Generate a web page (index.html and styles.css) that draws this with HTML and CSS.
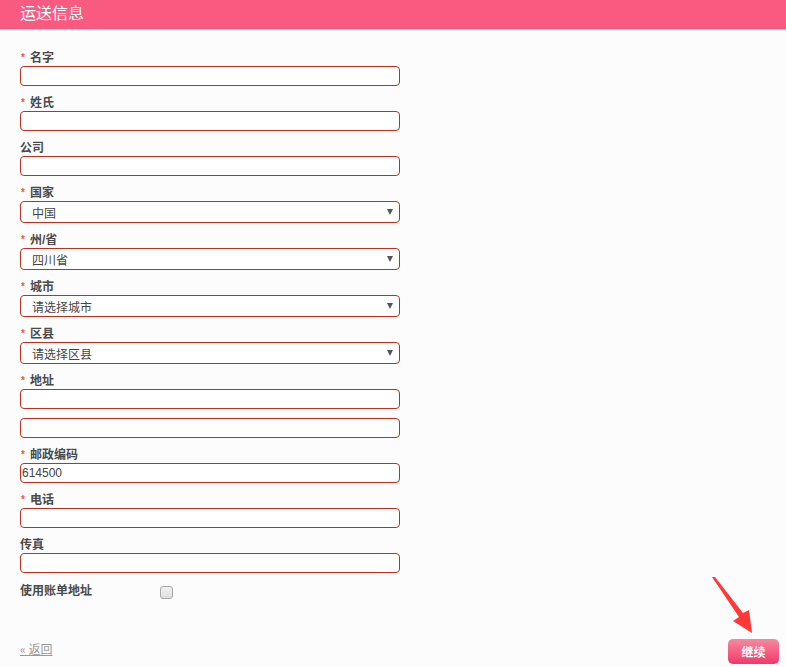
FILE: index.html
```html
<!DOCTYPE html>
<html lang="zh">
<head>
<meta charset="utf-8">
<title>运送信息</title>
<link rel="stylesheet" href="styles.css">
</head>
<body>
<header class="head"><h1 class="title">运送信息</h1></header>
<form class="form">
  <div class="field"><label class="lbl"><span class="req">*</span>名字</label><input class="inp" type="text"></div>
  <div class="field"><label class="lbl"><span class="req">*</span>姓氏</label><input class="inp" type="text"></div>
  <div class="field"><label class="lbl">公司</label><input class="inp" type="text"></div>
  <div class="field"><label class="lbl"><span class="req">*</span>国家</label><div class="sel"><span class="sel-text">中国</span></div></div>
  <div class="field"><label class="lbl"><span class="req">*</span>州/省</label><div class="sel"><span class="sel-text">四川省</span></div></div>
  <div class="field"><label class="lbl"><span class="req">*</span>城市</label><div class="sel"><span class="sel-text">请选择城市</span></div></div>
  <div class="field"><label class="lbl"><span class="req">*</span>区县</label><div class="sel"><span class="sel-text">请选择区县</span></div></div>
  <div class="field"><label class="lbl"><span class="req">*</span>地址</label><input class="inp" type="text"><input class="inp inp2" type="text"></div>
  <div class="field"><label class="lbl"><span class="req">*</span>邮政编码</label><input class="inp" type="text" value="614500"></div>
  <div class="field"><label class="lbl"><span class="req">*</span>电话</label><input class="inp" type="text"></div>
  <div class="field"><label class="lbl">传真</label><input class="inp" type="text"></div>
  <div class="check-row"><span class="lbl check-lbl">使用账单地址</span><span class="box"></span></div>
</form>
<footer class="foot">
  <a class="back" href="#">« 返回</a>
  <button class="btn" type="button">继续</button>
</footer>
<svg class="arrow" width="60" height="70" viewBox="705 570 60 70"><polygon points="712,577 715,577 743,613 749,610 752,633 733,621 739,617" fill="#ff3838"/></svg>
</body>
</html>
```
FILE: styles.css
```css
html, body { margin: 0; padding: 0; }
body {
  background: #fcfcfc;
  font-family: "Liberation Sans", "Noto Sans CJK SC", sans-serif;
  color: #444;
  width: 786px;
  height: 667px;
  position: relative;
  overflow: hidden;
}
.head {
  height: 29px;
  background: #f95b80;
  border-bottom: 1px solid #d9d9d9;
  display: flex;
  align-items: center;
  padding-left: 20px;
}
.title {
  margin: 0;
  font-size: 16px;
  font-weight: normal;
  color: #fff;
  line-height: 20px;
  position: relative;
  top: -1px;
}
.form {
  padding: 21px 0 0 20px;
  display: flex;
  flex-direction: column;
}
.field {
  display: flex;
  flex-direction: column;
  margin-bottom: 10px;
  width: 380px;
}
.lbl {
  font-size: 12px;
  line-height: 15px;
  height: 15px;
  font-weight: bold;
  color: #4a4a4a;
  display: flex;
  align-items: center;
}
.req {
  color: #f5552f;
  font-size: 10px;
  width: 10px;
  padding-left: 1px;
  box-sizing: border-box;
  position: relative;
  top: -1px;
}
.inp {
  box-sizing: border-box;
  height: 20px;
  width: 380px;
  margin: 0;
  border: 1px solid #c1301f;
  border-radius: 4px;
  background: #fff;
  font-family: "Liberation Sans", "Noto Sans CJK SC", sans-serif;
  font-size: 12px;
  color: #444;
  padding: 0 1px;
  outline: none;
}
.inp2 { margin-top: 9px; }
.sel {
  box-sizing: border-box;
  height: 22px;
  width: 380px;
  border: 1px solid #c1301f;
  border-radius: 4px;
  background: #fff;
  display: flex;
  align-items: center;
  padding-left: 11px;
  position: relative;
}
.sel-text {
  font-size: 12px;
  color: #444;
  font-family: "Noto Sans CJK SC", sans-serif;
  line-height: 14px;
  position: relative;
  top: 1px;
}
.sel::after {
  content: "";
  position: absolute;
  right: 6px;
  top: 7px;
  border-left: 3.5px solid transparent;
  border-right: 3.5px solid transparent;
  border-top: 6px solid #555;
}
.check-row {
  display: flex;
  align-items: center;
  height: 15px;
  margin-top: 1px;
}
.check-lbl { width: 140px; }
.box {
  width: 11px;
  height: 11px;
  border: 1px solid #a8a8a8;
  border-radius: 3px;
  background: linear-gradient(#f2f2f2, #dedede);
  margin-top: 2px;
}
.foot {
  position: absolute;
  left: 20px;
  right: 7px;
  bottom: 3px;
  display: flex;
  justify-content: space-between;
  align-items: center;
}
.back {
  font-size: 12px;
  color: #999;
  text-decoration: underline;
  font-family: "Noto Sans CJK SC", sans-serif;
  margin-top: -6px;
}
.btn {
  width: 51px;
  height: 25px;
  border: none;
  border-radius: 5px;
  background: linear-gradient(#f8889f, #f0396a);
  color: #fff;
  font-weight: bold;
  font-size: 12px;
  font-family: "Noto Sans CJK SC", sans-serif;
  padding: 0;
}
.arrow {
  position: absolute;
  left: 705px;
  top: 570px;
}
```
